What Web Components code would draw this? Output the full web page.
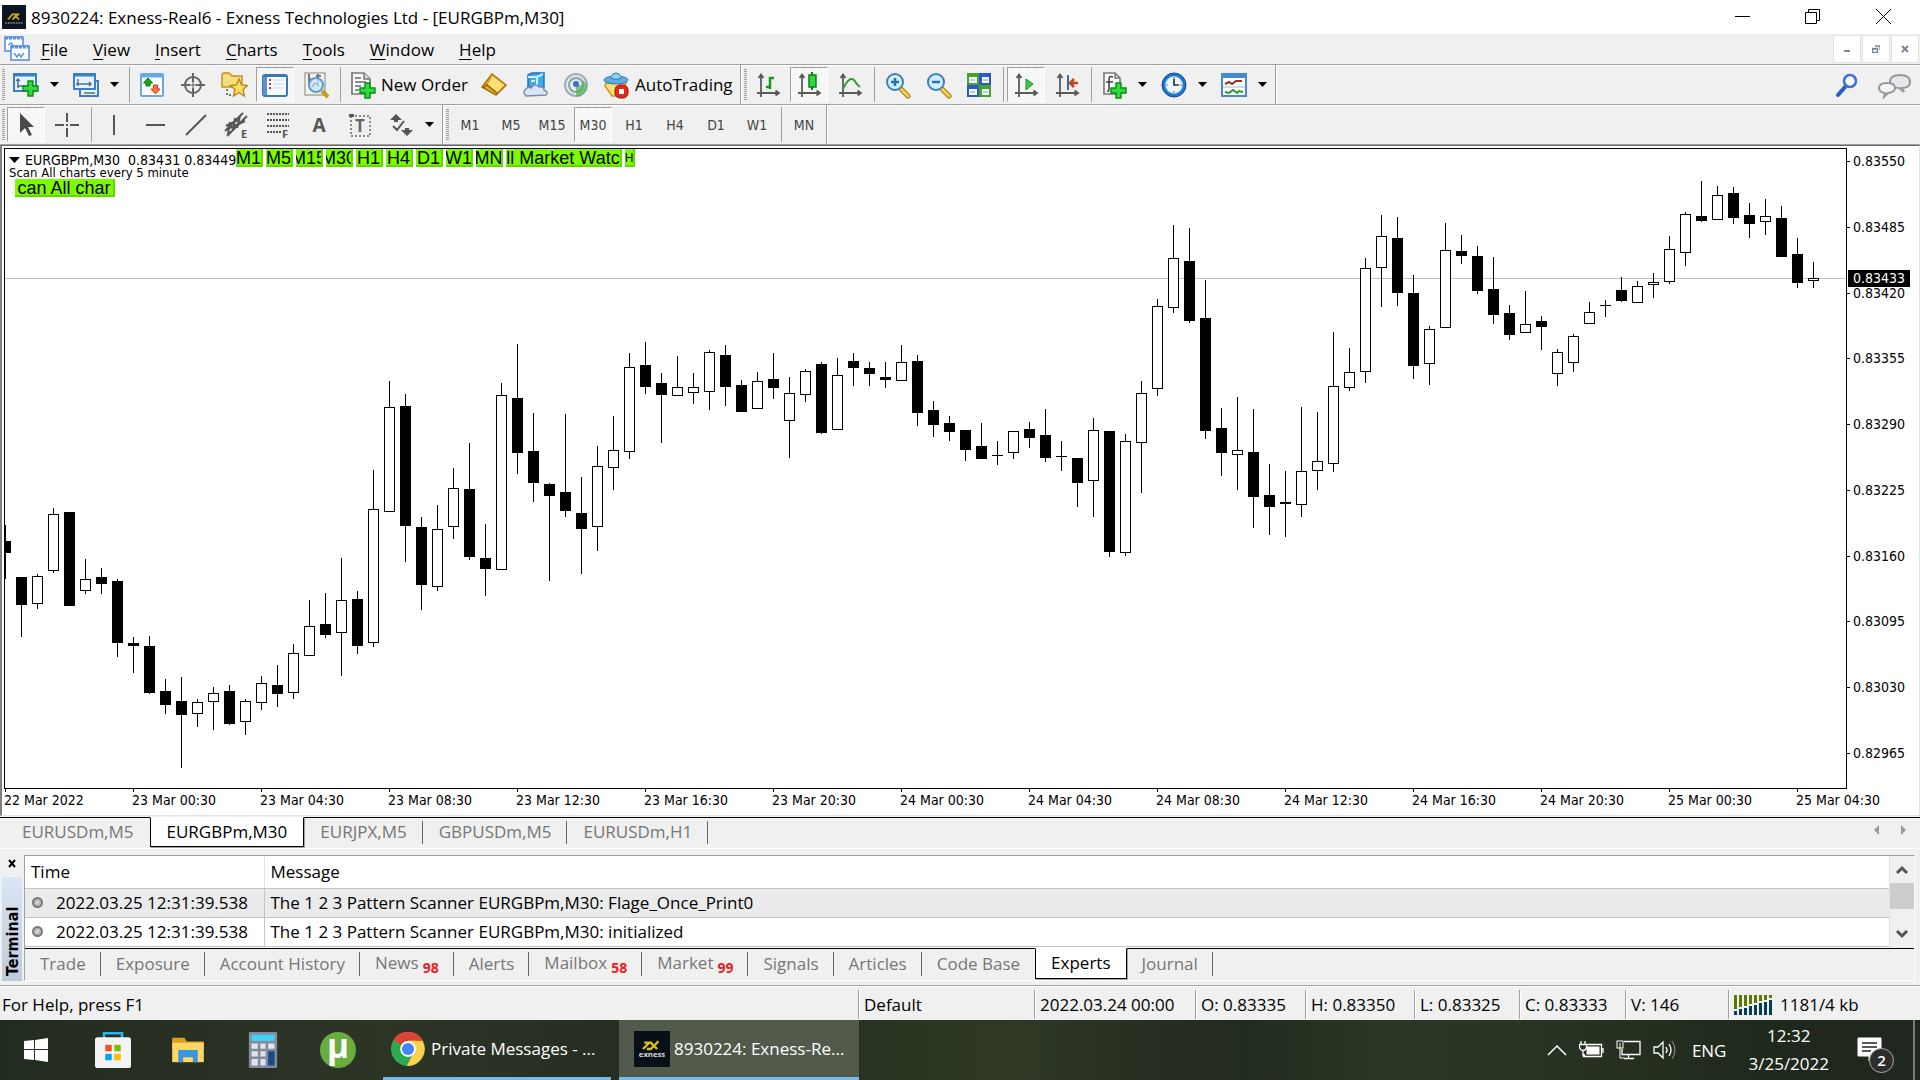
<!DOCTYPE html>
<html lang="en">
<head>
<meta charset="utf-8">
<title>8930224: Exness-Real6 - Exness Technologies Ltd - [EURGBPm,M30]</title>
<style>
    html, body {
        height: 100%;
        margin: 0;
    }

    body {
        font-family: "Open Sans", "Noto Sans", sans-serif;
        font-size: 17px;
        color: #000;
        background: #f0f0f0;
        overflow: hidden;
    }
</style>
</head>
<body>
<trading-desktop></trading-desktop>

<script>
// Icons are drawn on a 28x28 grid
const plus = (x, y) => `<path d="M${x + 5} ${y}h5v5h5v5h-5v5h-5v-5h-5v-5h5z" fill="#2fdc3c" stroke="#0b8a17" stroke-width="1.4"/>`;
const axes = '<path d="M7 4v22M3 22h22M4.5 7L7 3.5l2.5 3.5M21.5 19.5L25 22l-3.5 2.5" fill="none" stroke="#5a5a5a" stroke-width="1.8"/>';
const lens = (sign) => `<path d="M17 17l8 8" stroke="#a8780e" stroke-width="5" stroke-linecap="round"/><path d="M17 17l8 8" stroke="#f4d04e" stroke-width="3" stroke-linecap="round"/><circle cx="12" cy="11" r="8" fill="#d3effc" stroke="#3b7fbd" stroke-width="2"/>${sign}`;

const icons = {
    app: '<rect width="28" height="28" fill="#0b1622"/><path d="M7 17l5-6h5l-4 5M12 17l8-7M15 12l5 5" fill="none" stroke="#c9aa14" stroke-width="2"/><path d="M4 21h20" stroke="#888" stroke-width="2" stroke-dasharray="2 1"/>',
    chartDoc: '<g fill="#fff" stroke="#5a90e6" stroke-width="1.6"><rect x="2" y="2" width="18" height="14"/><rect x="8" y="11" width="18" height="14"/></g><path d="M2 3h18M8 12h18" stroke="#5a90e6" stroke-width="3" stroke-dasharray="3 1"/><path d="M5 10l3-2 2 3M11 18l3 4 2-3 2 3 3-4" fill="none" stroke="#5a90e6" stroke-width="1.4"/>',
    newChart: `<rect x="2" y="3" width="22" height="17" fill="#e7f4ff" stroke="#3b7fc4" stroke-width="2"/><path d="M2 4h22" stroke="#3b7fc4" stroke-width="3"/><path d="M6 8v9M4 10l2-2 2 2M5 15h9" fill="none" stroke="#4d6f91" stroke-width="1.5"/>${plus(11, 10)}`,
    profiles: '<rect x="8" y="10" width="18" height="15" fill="#e7f4ff" stroke="#3b7fc4" stroke-width="2"/><rect x="2" y="3" width="21" height="15" fill="#e7f4ff" stroke="#3b7fc4" stroke-width="2"/><path d="M2 4h21" stroke="#3b7fc4" stroke-width="3"/><path d="M6 8v7M4 13h15M17 11l2 2-2 2M12 22h11" fill="none" stroke="#4d6f91" stroke-width="1.5"/>',
    marketWatch: '<rect x="3" y="3" width="22" height="22" rx="1" fill="#fff" stroke="#69a8e6" stroke-width="2"/><path d="M3 5h22" stroke="#69a8e6" stroke-width="3"/><path d="M10 7l4.5 5H12v3H8v-3H5.5z" fill="#20a51f" stroke="#08780d"/><path d="M17.5 23L13 18h2.500v-4h4v4H22z" fill="#ff713d" stroke="#d63d11"/>',
    dataWindow: '<circle cx="14" cy="14" r="8" fill="none" stroke="#646464" stroke-width="2"/><path d="M14 2v9M14 17v9M2 14h9M17 14h9" stroke="#646464" stroke-width="2"/><path d="M14 9v10M9 14h10" stroke="#646464"/>',
    navigator: '<path d="M2 4q0-2 2-2h5l3 3h10v11H2z" fill="#f6df80" stroke="#bd9321" stroke-width="1.5"/><path d="M7 18v8M9 24h6" stroke="#555" stroke-width="1.5" stroke-dasharray="2 2"/><path d="M19 8l2.5 6 6 .5-4.5 4 1.5 6.5-5.5-3.5-5.5 3.5 1.5-6.5-4.5-4 6-.5z" fill="#fbdc66" stroke="#b58516" stroke-width="1.3"/>',
    terminal: '<rect x="2" y="4" width="24" height="21" rx="2" fill="#f6fbff" stroke="#3878b9" stroke-width="2"/><path d="M4 5v19" stroke="#5c93cd" stroke-width="4"/><path d="M2 5h24" stroke="#3878b9" stroke-width="2"/><path d="M9 8v11" stroke="#d42d27" stroke-width="2" stroke-dasharray="2 2"/><path d="M12 9h11M12 13h11M12 17h11" stroke="#c6d8e8"/>',
    tester: '<rect x="3" y="2" width="20" height="22" fill="#f4f4f1" stroke="#aaa69b" stroke-width="1.5"/><path d="M7 3v12M6 8h3M16 3v10M14 5h5" stroke="#777" stroke-width="2"/><path d="M20 20l6 6" stroke="#c89b1b" stroke-width="4"/><circle cx="14" cy="14" r="7" fill="#c8e6fac0" stroke="#5e9bcf" stroke-width="2"/><path d="M10 16l3-4 4 3" fill="none" stroke="#5e9bcf"/>',
    order: `<path d="M3 2h12l6 6v15H3z" fill="#fbfbfb" stroke="#777" stroke-width="1.7"/><path d="M15 2v6h6" fill="#ddd" stroke="#777" stroke-width="1.5"/><path d="M6 7h6M6 11h11M6 15h6M6 19h4" stroke="#666" stroke-width="1.5"/>${plus(11, 12)}`,
    editor: '<path d="M12 3l14 11-10 10L2 16z" fill="#e9b32c" stroke="#a76f0a" stroke-width="1.5"/><path d="M12 4L7 14l10 8 8-8z" fill="#ffdf74" stroke="#c98e18"/><path d="M3 17l4-3 10 8" fill="none" stroke="#87600c" stroke-width="1.5"/>',
    cloud: '<path d="M7 4l4-2h12v14H7z" fill="#43a9ed" stroke="#1b71b8" stroke-width="1.5"/><path d="M7 6h9l6-3M16 6v9M10 10h4" fill="none" stroke="#cdeeff" stroke-width="2"/><path d="M5 25q-4-4 0-7 2-3 5-1 4-6 8-1 5-1 5 3 5 2 2 5z" fill="#dae4f3" stroke="#7889ac" stroke-width="1.5"/>',
    signals: '<circle cx="14" cy="14" r="11" fill="#e3ecea" stroke="#9baeb8" stroke-width="2"/><circle cx="14" cy="14" r="7" fill="none" stroke="#8ba3ae" stroke-width="2"/><path d="M14 14v12q11-2 11-12l-4-5q0 7-7 5z" fill="#56ae58" opacity=".7"/><circle cx="14" cy="13" r="3" fill="#3970c9"/>',
    autoTrading: '<path d="M3 12h20l-6 13H9L2 15z" fill="#fbe078" stroke="#c5951c" stroke-width="1.5"/><ellipse cx="13" cy="9" rx="12" ry="4" fill="#5caee2" stroke="#2d7daf"/><path d="M7 7q2-5 6-5t6 5q-6 3-12 0z" fill="#8fcff3" stroke="#2d7daf"/><rect x="12" y="14" width="13" height="13" rx="5" fill="#e12b18" stroke="#a91109"/><rect x="16" y="18" width="5" height="5" fill="#fff"/>',
    bars: `${axes}<path d="M16 6v12M16 7h4M12 16h4" stroke="#169923" stroke-width="2.5"/>`,
    candles: `${axes}<path d="M17 1v18" stroke="#07820d" stroke-width="2"/><rect x="14" y="4" width="7" height="12" fill="#2ddb45" stroke="#07820d" stroke-width="1.5"/>`,
    line: `${axes}<path d="M7 18q6-13 11-9 3 5 6 7" fill="none" stroke="#319b37" stroke-width="2"/>`,
    zoomIn: lens('<path d="M12 7v8M8 11h8" stroke="#2970aa" stroke-width="2.5"/>'),
    zoomOut: lens('<path d="M8 11h8" stroke="#2970aa" stroke-width="2.5"/>'),
    tile: '<path d="M2 2h12v12H2zM14 14h12v12H14z" fill="#47a326"/><path d="M14 2h12v12H14zM2 14h12v12H2z" fill="#2b58ca"/><path d="M4 6h8v6H4zM17 6h7v6h-7zM4 18h8v6H4zM17 18h7v6h-7z" fill="#f2f8ff"/><path d="M5 9h5M18 9h5M5 21h5M18 21h5" stroke="#82a4cc"/>',
    scroll: `${axes}<path d="M14 8l7 5-7 6z" fill="#40cb48" stroke="#158e20"/>`,
    shift: `${axes}<path d="M15 4v15" stroke="#386c9f" stroke-width="2"/><path d="M25 12h-7M21 8l-4 4 4 4" fill="none" stroke="#be4519" stroke-width="2.5"/>`,
    indicators: `<path d="M4 2h11l5 5v16H4z" fill="#fff" stroke="#777" stroke-width="1.6"/><path d="M15 2v5h5" fill="none" stroke="#777" stroke-width="1.5"/><path d="M13 6q-4-2-4 3v9q0 3-2 2M6 11h7" fill="none" stroke="#444" stroke-width="1.6"/>${plus(11, 12)}`,
    periods: '<circle cx="14" cy="14" r="12" fill="#1f74cc" stroke="#104e99"/><circle cx="14" cy="14" r="8.5" fill="#edf7ff" stroke="#91c4f1"/><path d="M14 8v6h5" fill="none" stroke="#333" stroke-width="1.7"/><path d="M14 6v2M14 20v2M6 14h2M20 14h2" stroke="#777"/>',
    templates: '<rect x="2" y="3" width="24" height="22" fill="#fff" stroke="#458bcb" stroke-width="2"/><path d="M2 5h24" stroke="#458bcb" stroke-width="4"/><path d="M5 13l4-2 3 2 4-3h6" fill="none" stroke="#a52e22" stroke-width="2"/><path d="M3 16h22" stroke="#9bbbd4"/><path d="M5 21l4 1 4-3 4 3 2-2 4 1" fill="none" stroke="#27943b" stroke-width="2"/>',
    cursor: '<path d="M8 2v20l5-5 4 8 3-1-4-8h6z" fill="#4a4a4a"/>',
    cross: '<path d="M14 2v9M14 17v9M2 14h9M17 14h9M13 14h2" stroke="#555" stroke-width="2"/>',
    vline: '<path d="M14 4v20" stroke="#555" stroke-width="2"/>',
    hline: '<path d="M5 14h19" stroke="#555" stroke-width="2"/>',
    trend: '<path d="M4 24L24 4" stroke="#555" stroke-width="2"/>',
    channel: '<path d="M2 20L20 2M4 25L24 5M3 15l12-6M7 11l-2 12M12 7l-2 12M17 5l-3 12M7 17l15-7" stroke="#555" stroke-width="2"/><text x="18" y="27" font-size="11" font-weight="700" fill="#555">E</text>',
    fibo: '<path d="M3 3h22M3 9h22M3 15h22M3 21h14" stroke="#555" stroke-width="2" stroke-dasharray="2 1"/><text x="18" y="27" font-size="11" font-weight="700" fill="#555">F</text>',
    text: '<text x="14" y="21" text-anchor="middle" font-size="19" font-weight="700" fill="#555">A</text>',
    label: '<rect x="5" y="5" width="19" height="20" fill="none" stroke="#666" stroke-width="1.5" stroke-dasharray="2 2"/><path d="M3 3h5v3H3z" fill="#555"/><text x="14" y="21" text-anchor="middle" font-size="17" font-weight="700" fill="#666">T</text>',
    arrows: '<path d="M9 3l6 6H11v2H7V9H3zM20 25l-6-6h4v-2h4v2h4z" fill="#555"/><path d="M6 15l4 4 7-9" fill="none" stroke="#555" stroke-width="2"/>',
    search: '<path d="M5 24l7-8" stroke="#2a5ec2" stroke-width="4" stroke-linecap="round"/><circle cx="17" cy="10" r="6" fill="#f4f8ff" stroke="#3c70d2" stroke-width="2.5"/>',
    store: '<path d="M7 6V1h14v5" fill="none" stroke="#28b4ee" stroke-width="2"/><rect y="4" width="28" height="24" rx="2" fill="#f3f3f3"/><path d="M8 10h5v5H8z" fill="#f25022"/><path d="M15 10h5v5h-5z" fill="#7fba00"/><path d="M8 17h5v5H8z" fill="#00a4ef"/><path d="M15 17h5v5h-5z" fill="#ffb900"/>',
    explorer: '<path d="M1 4h10l2 3h14v7H1z" fill="#dfa01e"/><path d="M1 8h26v16H1z" fill="#ffd767"/><path d="M6 14h16v10h-4v-4h-8v4H6z" fill="#3796dc"/>',
    calculator: '<rect x="3" width="22" height="28" rx="1" fill="#818b9c"/><rect x="5" y="2" width="18" height="5" fill="#40d3f6"/><path d="M5 9h5v4H5zM12 9h4v4h-4zM18 9h5v4h-5zM5 15h5v4H5zM12 15h4v4h-4zM5 21h5v5H5zM12 21h4v5h-4z" fill="#e1e5eb"/><path d="M18 15h5v11h-5z" fill="#164b89"/>',
    torrent: '<circle cx="14" cy="14" r="14" fill="#68ad3e"/><text x="14" y="20" text-anchor="middle" font-size="26" font-weight="700" fill="#fff">µ</text>',
    chrome: '<circle cx="14" cy="14" r="14" fill="#2da94f"/><path d="M14 14L2 6.5A14 14 0 0 1 26.5 7.5z" fill="#db4437"/><path d="M26 7.5A14 14 0 0 1 13 28l7-14-6-7z" fill="#fdd14b"/><circle cx="14" cy="14" r="6.5" fill="#fff"/><circle cx="14" cy="14" r="5" fill="#4285f4"/>',
    exness: '<rect width="28" height="28" fill="#071017"/><path d="M7 14l5-5H8M10 14h3l6-6M13 9l5 5" fill="none" stroke="#e0bd17" stroke-width="1.8"/><text x="14" y="20" text-anchor="middle" font-size="6" font-weight="700" fill="#ddd">exness</text>'
};

function icon(name, size = 28) {
    return `<svg width="${size}" height="${size}" viewBox="0 0 28 28" aria-hidden="true">${icons[name]}</svg>`;
}

const reset = `
    :host, * { box-sizing: border-box; }
    button { font: inherit; color: inherit; background: none; border: 0; padding: 0; margin: 0; }
    a { color: inherit; text-decoration: none; }
    svg { display: block; flex: none; }
`;

function define(name, markup) {
    customElements.define(name, class extends HTMLElement {
        connectedCallback() {
            const root = this.attachShadow({ mode: 'open' });
            root.innerHTML = `<style>${reset}</style>` + (typeof markup === 'function' ? markup(this) : markup);
        }
    });
}

define('trading-desktop', `
    <style>
        :host { display: flex; flex-direction: column; height: 100vh; }
        price-chart { flex: 1; min-height: 0; margin-bottom: 1px; }
    </style>
    <title-bar></title-bar>
    <menu-bar></menu-bar>
    <main-toolbar></main-toolbar>
    <line-toolbar></line-toolbar>
    <price-chart></price-chart>
    <chart-tabs></chart-tabs>
    <terminal-panel></terminal-panel>
    <status-bar></status-bar>
    <task-bar></task-bar>
`);

define('title-bar', `
    <style>
        :host { display: flex; align-items: center; flex: none; height: 34px; background: #fff; padding-left: 2px; }
        h1 { flex: 1; margin: 0 0 0 5px; font-size: inherit; font-weight: 400; white-space: nowrap; }
        button { width: 70px; height: 34px; display: grid; place-items: center; }
        button:last-child { width: 72px; }
        svg.win { fill: none; stroke: #000; }
    </style>
    ${icon('app', 24)}
    <h1>8930224: Exness-Real6 - Exness Technologies Ltd - [EURGBPm,M30]</h1>
    <button aria-label="Minimize"><svg class="win" width="16" height="16"><path d="M0 7.5h15"/></svg></button>
    <button aria-label="Restore"><svg class="win" width="16" height="16"><path d="M.5 3.5h11v11H.5zM3.5 3V.5h11v11H12"/></svg></button>
    <button aria-label="Close"><svg class="win" width="16" height="16"><path d="M0 0l15 15M15 0L0 15"/></svg></button>
`);

define('menu-bar', `
    <style>
        :host { display: flex; align-items: center; flex: none; height: 31px; padding-left: 3px; border-bottom: 1px solid #a0a0a0; }
        nav { display: flex; flex: 1; gap: 25px; padding-left: 10px; }
        u { text-underline-offset: 3px; }
        button { width: 28px; height: 28px; margin-right: 1px; background: #fff; border: 1px solid #e3e3e3; display: grid; place-items: center; }
        button svg { fill: none; stroke: #7a8794; stroke-width: 2; }
    </style>
    ${icon('chartDoc')}
    <nav>
        <a href="#file"><u>F</u>ile</a>
        <a href="#view"><u>V</u>iew</a>
        <a href="#insert"><u>I</u>nsert</a>
        <a href="#charts"><u>C</u>harts</a>
        <a href="#tools"><u>T</u>ools</a>
        <a href="#window"><u>W</u>indow</a>
        <a href="#help"><u>H</u>elp</a>
    </nav>
    <button aria-label="Minimize chart"><svg width="8" height="8"><path d="M1 6h6"/></svg></button>
    <button aria-label="Restore chart"><svg width="8" height="8"><path d="M0 4h6M.5 3.5h5v4h-5zM3 1h5v4" stroke-width="1.4"/></svg></button>
    <button aria-label="Close chart"><svg width="8" height="8"><path d="M1 1l6 6M7 1L1 7"/></svg></button>
`);

define('tool-button', (el) => `
    <style>
        :host { display: flex; flex: none; margin-right: 3px; }
        button { display: flex; align-items: center; min-width: 38px; height: 35px; justify-content: center; white-space: nowrap; }
        button.label { padding: 0 4px 0 5px; }
        button.label span { margin-left: 4px; }
        button.period { font: 14px "DejaVu Sans Condensed", "DejaVu Sans", sans-serif; font-stretch: condensed; color: #444; }
        :host([pressed]) button { background: repeating-conic-gradient(#f0f0f0 0 25%, #fff 0 50%) 0 0 / 2px 2px; border: 1px solid; border-color: #a0a0a0 #fff #fff #a0a0a0; }
        .drop { min-width: 19px; width: 19px; }
    </style>
    <button class="${el.hasAttribute('period') ? 'period' : el.textContent ? 'label' : ''}" aria-label="${el.textContent || el.getAttribute('icon')}">
        ${el.hasAttribute('icon') ? icon(el.getAttribute('icon')) : ''}
        <span><slot></slot></span>
    </button>
    ${el.hasAttribute('drop') ? '<button class="drop" aria-label="More"><svg width="9" height="5"><path d="M0 0h9L4.5 5z"/></svg></button>' : ''}
`);

const barStyle = `
    :host { display: flex; align-items: center; flex: none; height: 40px; border-bottom: 1px solid #a0a0a0; box-shadow: inset 0 1px #fff; }
    .grip { width: 3px; height: 31px; margin: 0 2px; background: repeating-linear-gradient(#a0a0a0 0 1px, #f0f0f0 1px 2px); flex: none; }
    .sep { width: 3px; height: 35px; margin-right: 3px; border-right: 1px solid #a0a0a0; flex: none; }
    .end { width: 2px; height: 39px; border-left: 1px solid #a0a0a0; border-right: 1px solid #fff; flex: none; }
`;

define('main-toolbar', `
    <style>
        ${barStyle}
        .right { display: flex; margin-left: auto; gap: 17px; padding-right: 8px; }
    </style>
    <i class="grip"></i>
    <tool-button icon="newChart" drop></tool-button>
    <tool-button icon="profiles" drop></tool-button>
    <i class="sep"></i>
    <tool-button icon="marketWatch"></tool-button>
    <tool-button icon="dataWindow"></tool-button>
    <tool-button icon="navigator"></tool-button>
    <tool-button icon="terminal" pressed></tool-button>
    <tool-button icon="tester"></tool-button>
    <i class="sep"></i>
    <tool-button icon="order">New Order</tool-button>
    <tool-button icon="editor"></tool-button>
    <tool-button icon="cloud"></tool-button>
    <tool-button icon="signals"></tool-button>
    <tool-button icon="autoTrading">AutoTrading</tool-button>
    <i class="end"></i>
    <i class="grip"></i>
    <tool-button icon="bars"></tool-button>
    <tool-button icon="candles" pressed></tool-button>
    <tool-button icon="line"></tool-button>
    <i class="sep"></i>
    <tool-button icon="zoomIn"></tool-button>
    <tool-button icon="zoomOut"></tool-button>
    <tool-button icon="tile"></tool-button>
    <i class="sep"></i>
    <tool-button icon="scroll" pressed></tool-button>
    <tool-button icon="shift"></tool-button>
    <i class="sep"></i>
    <tool-button icon="indicators" drop></tool-button>
    <tool-button icon="periods" drop></tool-button>
    <tool-button icon="templates" drop></tool-button>
    <i class="end"></i>
    <div class="right">
        <button aria-label="Search">${icon('search')}</button>
        <button aria-label="Community"><svg width="34" height="28"><path d="M24 17q8 0 8-6 0-7-10-7-10 0-10 7 0 6 9 6l5 4z" fill="#e8e8ec" stroke="#999" stroke-width="2"/><path d="M7 22q-6-1-6-5 0-5 8-5t8 5q0 4-7 5l-4 4z" fill="#f5f5f7" stroke="#999" stroke-width="2"/></svg></button>
    </div>
`);

define('line-toolbar', `
    <style>${barStyle}</style>
    <i class="grip"></i>
    <tool-button icon="cursor" pressed></tool-button>
    <tool-button icon="cross"></tool-button>
    <i class="sep"></i>
    <tool-button icon="vline"></tool-button>
    <tool-button icon="hline"></tool-button>
    <tool-button icon="trend"></tool-button>
    <tool-button icon="channel"></tool-button>
    <tool-button icon="fibo"></tool-button>
    <tool-button icon="text"></tool-button>
    <tool-button icon="label"></tool-button>
    <tool-button icon="arrows" drop></tool-button>
    <i class="end"></i>
    <i class="grip"></i>
    <tool-button period>M1</tool-button>
    <tool-button period>M5</tool-button>
    <tool-button period>M15</tool-button>
    <tool-button period pressed>M30</tool-button>
    <tool-button period>H1</tool-button>
    <tool-button period>H4</tool-button>
    <tool-button period>D1</tool-button>
    <tool-button period>W1</tool-button>
    <i class="sep"></i>
    <tool-button period>MN</tool-button>
    <i class="end"></i>
`);

// One bar per entry: high, body top, body bottom, low, 1 when it closed up.
// Values are pixels on the price scale, 16px between bars.
const candles = [
    [525,541,553,579,0],[577,577,605,637,0],[574,576,604,609,1],[508,514,571,573,1],[512,512,606,606,0],
    [559,579,591,594,1],[568,577,584,594,0],[579,581,643,657,0],[637,643,646,673,0],[636,646,693,694,0],
    [679,691,705,714,0],[677,701,715,768,0],[699,702,714,727,1],[687,693,702,730,1],[685,691,724,725,0],
    [699,701,722,735,1],[676,683,703,710,1],[665,685,694,707,0],[644,653,693,699,1],[600,626,656,656,1],
    [593,624,635,638,0],[558,600,633,676,1],[591,599,646,654,0],[470,509,643,647,1],[381,407,512,512,1],
    [394,406,526,562,0],[517,527,585,610,0],[505,529,587,591,1],[468,488,527,539,1],[443,489,557,560,0],
    [524,558,569,596,0],[383,395,570,570,1],[344,398,453,474,0],[413,451,483,502,0],[483,484,496,581,0],
    [414,492,511,517,0],[477,513,529,574,0],[446,466,527,551,1],[416,450,468,490,1],[353,367,452,459,1],
    [342,365,387,394,0],[373,383,395,443,0],[356,387,396,396,1],[373,387,393,404,1],[350,352,392,410,1],
    [345,355,387,406,0],[380,385,412,412,0],[372,381,409,409,1],[353,379,388,399,0],[377,393,421,458,1],
    [369,371,395,402,1],[362,364,433,434,0],[358,375,430,430,1],[353,361,368,386,0],[362,368,374,386,0],
    [362,377,380,388,0],[345,362,381,381,1],[355,361,413,426,0],[401,410,425,437,0],[416,423,432,441,0],
    [430,430,450,461,0],[423,446,459,459,0],[441,455,456,465,0],[431,431,453,459,1],[422,429,438,448,0],
    [409,435,458,462,0],[441,456,457,471,0],[458,458,483,507,0],[418,430,481,517,1],[431,431,552,557,0],
    [434,441,553,556,1],[381,393,443,493,1],[299,306,389,396,1],[225,258,308,313,1],[228,261,321,323,0],
    [280,318,431,439,0],[408,428,453,476,0],[397,450,455,490,1],[409,452,497,528,0],[464,495,507,535,0],
    [471,502,504,537,0],[407,471,505,517,1],[412,461,471,490,1],[332,386,464,472,1],[348,372,388,391,1],
    [258,268,372,383,1],[215,236,268,307,1],[217,238,293,306,0],[275,293,366,379,0],[326,329,364,385,1],
    [223,250,328,328,1],[235,251,256,264,0],[246,256,291,294,0],[257,289,315,324,0],[305,313,335,340,0],
    [291,324,333,333,1],[316,321,327,350,0],[349,352,374,386,1],[334,336,363,372,1],[302,312,324,324,1],
    [300,305,306,317,0],[277,290,301,302,0],[281,286,303,303,1],[273,282,285,298,1],[236,249,282,284,1],
    [212,214,253,266,1],[181,216,221,222,0],[186,195,220,220,1],[187,193,218,224,0],[203,215,224,238,0],
    [199,216,222,235,1],[206,218,257,257,0],[238,254,283,288,0],[262,278,281,288,1]
];

function drawCandles() {
    const top = 149;
    return candles.map(([high, open, close, low, up], i) => {
        const x = i * 16;
        const wick = `<path d="M${x}.5 ${high - top}V${low - top}" stroke="#000"/>`;
        const body = up
            ? `<rect x="${x - 4.5}" y="${open - top + 0.5}" width="10" height="${close - open - 1}" fill="#fff" stroke="#000"/>`
            : `<rect x="${x - 5}" y="${open - top}" width="11" height="${close - open}"/>`;
        return wick + body;
    }).join('');
}

const prices = ['0.83550', '0.83485', '0.83420', '0.83355', '0.83290', '0.83225', '0.83160', '0.83095', '0.83030', '0.82965'];
const times = ['22 Mar 2022', '23 Mar 00:30', '23 Mar 04:30', '23 Mar 08:30', '23 Mar 12:30', '23 Mar 16:30', '23 Mar 20:30', '24 Mar 00:30',
    '24 Mar 04:30', '24 Mar 08:30', '24 Mar 12:30', '24 Mar 16:30', '24 Mar 20:30', '25 Mar 00:30', '25 Mar 04:30'];

define('price-chart', `
    <style>
        :host { display: grid; grid-template: minmax(0, 1fr) 26px / minmax(0, 1fr) 72px; background: #fff; padding: 2px 0 0 2px;
            border: solid; border-width: 1px 1px 1px 2px; border-color: #696969 #e3e3e3 #e3e3e3 #808080;
            font: 14px/15px "DejaVu Sans Condensed", "DejaVu Sans", sans-serif; font-stretch: condensed; }
        .plot { position: relative; border: 1px solid #000; overflow: hidden; }
        .plot > svg { width: 100%; height: 100%; }
        .quote { position: absolute; left: 4px; top: 4px; white-space: nowrap; }
        .quote p { margin: 0; display: flex; align-items: center; gap: 5px; }
        .quote p:first-child { line-height: 14px; }
        .quote p + p { line-height: 12px; font-size: 13px; }
        .tags { position: absolute; left: 231px; top: 0; display: flex; gap: 3px; }
        .tag { width: 27px; height: 18px; display: flex; justify-content: center; overflow: hidden; white-space: nowrap; background: #7cfc00;
            border: solid #62d900; border-width: 0 2px 2px 0; font: 18px/18px "Liberation Sans", Arial, sans-serif; }
        .tag.wide { width: 116px; }
        .tag.small { width: 10px; font-size: 12px; }
        .scan { position: absolute; left: 10px; top: 30px; width: 100px; }
        .prices { position: relative; display: flex; flex-direction: column; justify-content: space-between; padding: 6px 0 28px; }
        .prices span { display: flex; align-items: center; gap: 3px; }
        .prices span::before { content: ""; width: 3px; height: 1px; background: #000; }
        .now { position: absolute; left: 1px; top: 122px; padding: 1px 5px; background: #000; color: #fff; font-weight: 400; }
        .times { grid-column: 1 / -1; display: flex; overflow: hidden; }
        .times span { flex: 0 0 128px; white-space: nowrap; }
        .times span::before { content: ""; display: block; width: 1px; height: 3px; margin: 0 0 1px 1px; background: #000; }
    </style>
    <div class="plot">
        <svg role="img" aria-label="EURGBPm M30 candlestick chart"><path d="M0 129.5h4000" stroke="#c0c0c0"/>${drawCandles()}</svg>
        <div class="quote">
            <p><svg width="11" height="6"><path d="M0 0h11L5.5 6z"/></svg><span>EURGBPm,M30&nbsp; 0.83431 0.83449</span></p>
            <p>Scan All charts every 5 minute</p>
        </div>
        <div class="tags">
            ${['M1', 'M5', 'M15', 'M30', 'H1', 'H4', 'D1', 'W1', 'MN'].map((t) => `<button class="tag">${t}</button>`).join('')}
            <button class="tag wide">ll Market Watc</button>
            <button class="tag small">H</button>
        </div>
        <button class="tag scan">can All char</button>
    </div>
    <div class="prices">
        ${prices.map((p) => `<span>${p}</span>`).join('')}
        <b class="now">0.83433</b>
    </div>
    <div class="times">${times.map((t) => `<span>${t}</span>`).join('')}</div>
`);

const tabStyle = `
    .tabs { display: flex; color: #777; }
    .tabs button { position: relative; padding: 0 16px 2px; height: 30px; border-top: 1px solid #000; white-space: nowrap; }
    .tabs button::after { content: ""; position: absolute; right: 0; top: 3px; bottom: 3px; width: 1px; background: #666; }
    .tabs .active { color: #000; background: #fff; border: 1px solid #000; border-top-color: #fff; box-shadow: 1px 1px #a0a0a0; }
    .tabs .active::after, .tabs .before::after { display: none; }
    .fill { flex: 1; border-top: 1px solid #000; }
`;

define('chart-tabs', `
    <style>
        ${tabStyle}
        :host { display: block; flex: none; height: 32px; border-bottom: 1px solid #fff; }
        .tabs button:first-child { padding: 0 16px 2px 22px; }
        .fill { display: flex; justify-content: flex-end; gap: 22px; padding: 7px 14px 0 0; }
    </style>
    <div class="tabs">
        <button class="before">EURUSDm,M5</button>
        <button class="active">EURGBPm,M30</button>
        <button>EURJPX,M5</button>
        <button>GBPUSDm,M5</button>
        <button>EURUSDm,H1</button>
        <div class="fill">
            <svg width="5" height="10"><path d="M5 0v10L0 5z" fill="#999"/></svg>
            <svg width="5" height="10"><path d="M0 0v10l5-5z" fill="#999"/></svg>
        </div>
    </div>
`);

define('terminal-panel', `
    <style>
        ${tabStyle}
        :host { display: grid; flex: none; grid-template-columns: 24px minmax(0, 1fr); height: 137px; padding: 6px 5px 4px 0; border-bottom: 1px solid #a0a0a0; }
        .side { display: flex; flex-direction: column; align-items: center; }
        .close { height: 22px; width: 24px; display: grid; place-items: center; padding-bottom: 5px; }
        .name { flex: 1; width: 20px; padding-top: 5px; background: linear-gradient(#bccada, #d9e6f3); writing-mode: vertical-rl; transform: rotate(180deg);
            display: flex; align-items: center; font: 700 16px "DejaVu Sans Condensed", "DejaVu Sans", sans-serif; font-stretch: condensed; }
        .pane { border: 1px solid; border-color: #a0a0a0 #fff #fff #a0a0a0; }
        .log { display: flex; height: 92px; overflow: hidden; background: #fff; }
        table { flex: 1; border-collapse: collapse; table-layout: fixed; align-self: flex-start; }
        th, td { text-align: left; font-weight: 400; padding: 0 0 0 6px; white-space: nowrap; border: solid #c4c4c4; border-width: 0 1px 1px 0; line-height: 20px; }
        tr > :last-child { border-right: 0; }
        th { height: 32px; border-right-color: #e3e3e3; }
        td { height: 29px; }
        tr > :first-child { width: 239px; }
        tbody tr:first-child { background: #ebebeb; }
        td svg { display: inline-block; margin: 0 13px 0 1px; vertical-align: 1px; }
        .scroll { width: 25px; background: #f0f0f0; display: flex; flex-direction: column; border-left: 1px solid #e3e3e3; }
        .scroll button { height: 27px; display: grid; place-items: center; }
        .scroll button:last-child { margin-top: auto; }
        .scroll i { height: 26px; background: #cdcdcd; }
        .scroll path { fill: none; stroke: #555; stroke-width: 3; }
        .tabs button { padding: 0 15px 2px; height: 31px; }
        sub { margin-left: 4px; vertical-align: -4px; font: 700 14px/14px "Open Sans", "Noto Sans", sans-serif; color: #ed1c24; }
    </style>
    <div class="side">
        <button class="close" aria-label="Close terminal"><svg width="8" height="9"><path d="M1 1l6 7M7 1L1 8" stroke="#000" stroke-width="2"/></svg></button>
        <div class="name">Terminal</div>
    </div>
    <div class="pane">
        <div class="log">
            <table>
                <thead><tr><th>Time</th><th>Message</th></tr></thead>
                <tbody>
                    <tr><td><svg width="11" height="11"><circle cx="5.5" cy="5.5" r="4.5" fill="#bbb" stroke="#777" stroke-width="2"/><path d="M4 7l3-3" stroke="#fff"/></svg>2022.03.25 12:31:39.538</td><td>The 1 2 3 Pattern Scanner EURGBPm,M30: Flage_Once_Print0</td></tr>
                    <tr><td><svg width="11" height="11"><circle cx="5.5" cy="5.5" r="4.5" fill="#bbb" stroke="#777" stroke-width="2"/><path d="M4 7l3-3" stroke="#fff"/></svg>2022.03.25 12:31:39.538</td><td>The 1 2 3 Pattern Scanner EURGBPm,M30: initialized</td></tr>
                </tbody>
            </table>
            <div class="scroll">
                <button aria-label="Scroll up"><svg width="14" height="9"><path d="M2 8l5-5 5 5"/></svg></button>
                <i></i>
                <button aria-label="Scroll down"><svg width="14" height="9"><path d="M2 1l5 5 5-5"/></svg></button>
            </div>
        </div>
        <div class="tabs">
            <button>Trade</button>
            <button>Exposure</button>
            <button>Account History</button>
            <button>News<sub>98</sub></button>
            <button>Alerts</button>
            <button>Mailbox<sub>58</sub></button>
            <button>Market<sub>99</sub></button>
            <button>Signals</button>
            <button>Articles</button>
            <button class="before">Code Base</button>
            <button class="active">Experts</button>
            <button>Journal</button>
            <div class="fill"></div>
        </div>
    </div>
`);

define('status-bar', `
    <style>
        :host { display: grid; flex: none; grid-template-columns: minmax(0, 1fr) 176px 161px 110px 109px 105px 106px 103px 192px; height: 34px; padding-top: 4px; box-shadow: inset 0 1px #fff; }
        span { display: flex; align-items: center; gap: 8px; padding-left: 5px; border-left: 1px solid #a0a0a0; box-shadow: inset 1px 0 #fff; white-space: nowrap; margin-bottom: 1px; }
        span:first-of-type { padding-left: 2px; border: 0; box-shadow: none; }
    </style>
    <span>For Help, press F1</span>
    <span>Default</span>
    <span>2022.03.24 00:00</span>
    <span>O: 0.83335</span>
    <span>H: 0.83350</span>
    <span>L: 0.83325</span>
    <span>C: 0.83333</span>
    <span>V: 146</span>
    <span><svg width="38" height="20">${[14, 12, 11, 9, 8, 6, 5, 3].map((h, i) => `<path d="M${i * 5} 0h3v${h}h-3z" fill="#5c7a00"/><path d="M${i * 5} ${h + 2}h3V20h-3z" fill="#063d58"/>`).join('')}</svg>1181/4 kb</span>
`);

define('task-bar', `
    <style>
        :host { display: flex; align-items: stretch; flex: none; height: 60px; color: #fff;
            background: linear-gradient(90deg, #222b1f, #2d3527 20%, #232d20 35%, #283421 45%, #2f3926 53%, #242d20 61%, #222b1f 65%, #2b3825 72%, #2a3624 78%, #1f291c 92%, #20271f); }
        button { display: flex; align-items: center; justify-content: center; width: 75px; }
        .start { padding-right: 3px; }
        .task { width: 240px; justify-content: flex-start; gap: 4px; padding: 0 8px; border-bottom: 3px solid #76b9ed; white-space: nowrap; }
        .chrome { width: 228px; margin: 0 8px; gap: 6px; }
        .on { background: #515a4b; padding: 0 15px; }
        .tray { display: flex; align-items: center; margin-left: auto; gap: 12px; }
        .tray button { width: auto; min-width: 18px; }
        .tray path, .tray rect { fill: none; stroke: #fff; }
        .tray .lang { margin-left: 3px; }
        time { display: flex; flex-direction: column; text-align: center; line-height: 28px; margin-left: 10px; }
        .tray .notes { position: relative; width: 46px; height: 60px; margin: 0 8px 0 6px; }
        .notes span { position: absolute; left: 22px; top: 28px; width: 25px; height: 25px; border: 1px solid #aaa; border-radius: 50%; background: #2b2e2b; font: 600 15px/23px "Open Sans", sans-serif; }
        .tray .peek { width: 7px; min-width: 7px; height: 60px; border-left: 2px solid #777; }
    </style>
    <button class="start" aria-label="Start"><svg width="24" height="24"><path d="M0 3l10-1v9H0zM11 2l13-2v11H11zM0 12h10v10L0 21zM11 12h13v12l-13-2z" fill="#fff"/></svg></button>
    <button aria-label="Store">${icon('store', 36)}</button>
    <button aria-label="File Explorer">${icon('explorer', 34)}</button>
    <button aria-label="Calculator">${icon('calculator', 36)}</button>
    <button aria-label="Torrents">${icon('torrent', 36)}</button>
    <button class="task chrome">${icon('chrome', 34)}Private Messages - ...</button>
    <button class="task on">${icon('exness', 36)}8930224: Exness-Re...</button>
    <div class="tray">
        <button aria-label="Show hidden icons"><svg width="20" height="12"><path d="M1 11l9-9 9 9" stroke-width="1.5"/></svg></button>
        <button aria-label="Battery"><svg width="25" height="18"><path d="M2 0v3M6 0v3M.5 3.5h7v3q-1 3-3.5 3t-3.5-3zM4 10v4h2M8 3.5h14.5v12H4.5V13M24 7v5" stroke-width="1.3"/><rect x="8" y="6" width="12" height="7" style="fill: #fff"/></svg></button>
        <button aria-label="Network"><svg width="25" height="20"><path d="M8 1.5h16v13H6V9M12.5 15v3M8 18.5h10" stroke-width="1.3"/><rect x="1" y="1" width="6" height="7"/><path d="M4 3v15h4"/></svg></button>
        <button aria-label="Volume"><svg width="24" height="20"><path d="M1 7h4l5-5v16l-5-5H1zM13 7q2 3 0 6M16 4q4 6 0 12" stroke-width="1.3"/><path d="M19 1q6 9 0 18" opacity=".5"/></svg></button>
        <button class="lang">ENG</button>
        <time>12:32<span>3/25/2022</span></time>
        <button class="notes" aria-label="Notifications"><svg width="26" height="26"><path d="M1 1h23v18h-8l-4 5v-5H1z" style="fill: #fff"/><path d="M5 6h15M5 10h15M5 14h9" style="stroke: #222; stroke-width: 1.5"/></svg><span>2</span></button>
        <button class="peek" aria-label="Show desktop"></button>
    </div>
`);
</script>
</body>
</html>
